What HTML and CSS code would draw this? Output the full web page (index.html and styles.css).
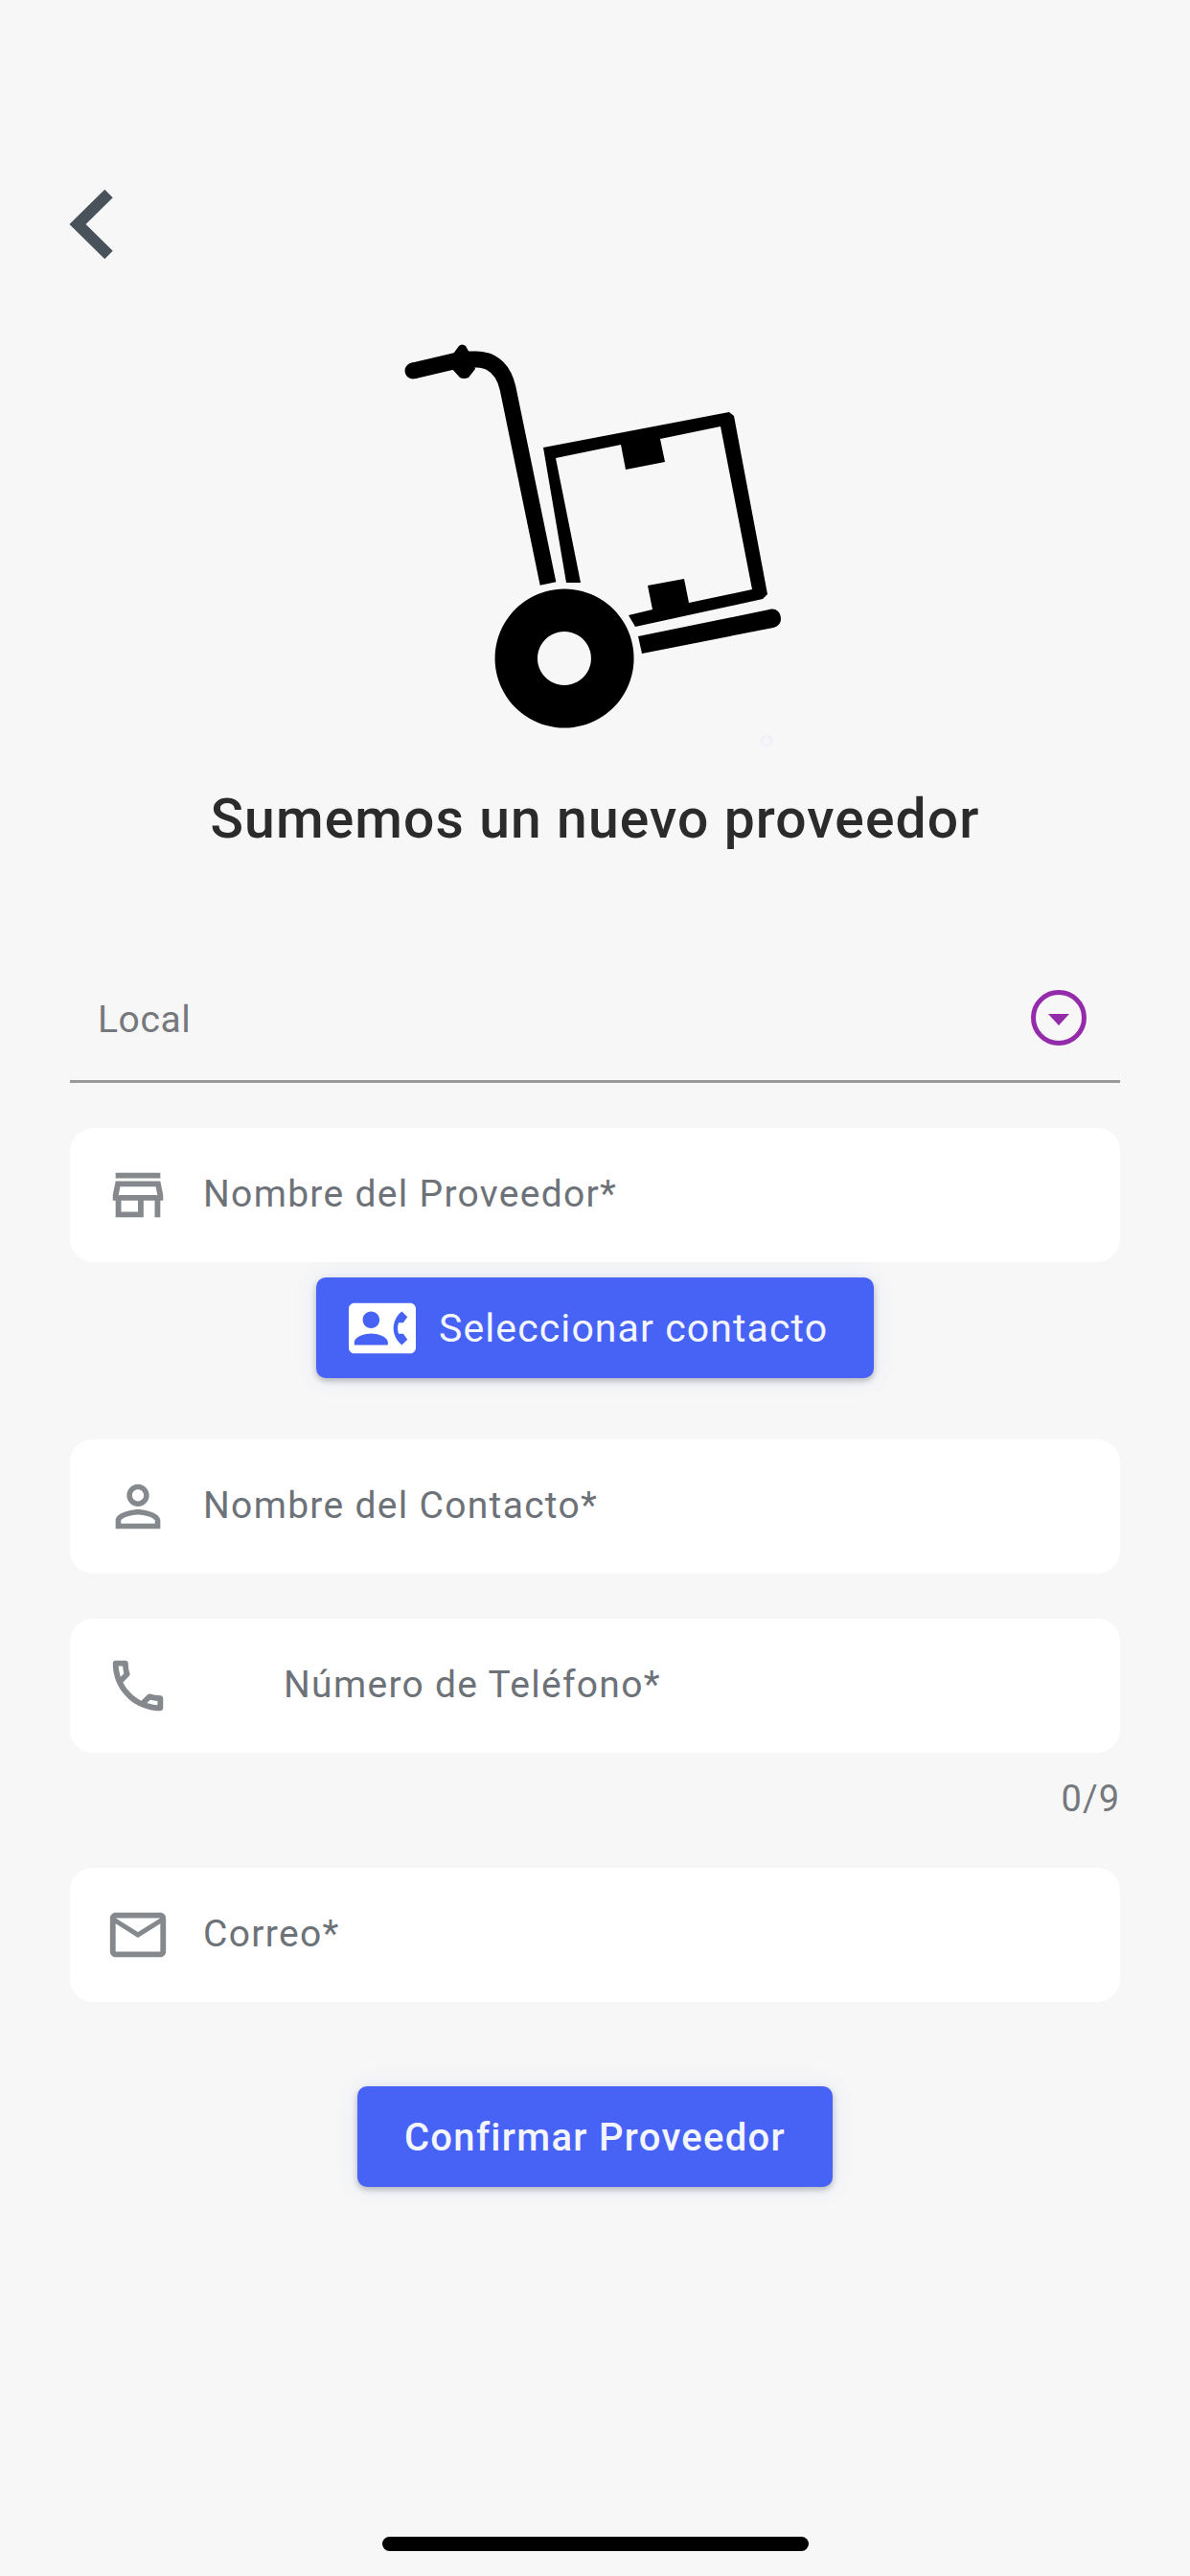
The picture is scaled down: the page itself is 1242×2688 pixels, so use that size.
FILE: index.html
```html
<!DOCTYPE html>
<html>
	<head>
		<meta charset="utf-8">
		<title>Sumemos un nuevo proveedor</title>
		<link rel="stylesheet" href="styles.css">
	</head>
	<body>
		<div class="page">
			<a class="back">
				<svg width="60" height="80" viewBox="70 194 60 80"><path class="back-line" d="M113.500 202 81 234l32.500 32"/></svg>
			</a>

			<svg class="hero" width="400" height="425" viewBox="421 355 400 425">
				<!-- handle and pole -->
				<path class="pole" d="M431 387 482 375H497C516 375 526 388 530 405L572 609" />
				<circle cx="431" cy="387" r="8.500" />
				<path d="M471 372 479 361Q482 358 486 361L491 370 496 385 489 394Q484 396 480 394L471 384Z" />
				<!-- box -->
				<path d="M567 467 761 430 766 434 801 620 796 625 663 654 656 642 681 636 676 611 714 604 719 629 785 615 752 445 689 458 694 482 653 490 648 464 580 478 606 608 591 608Z" />
				<!-- platform -->
				<path d="M666 664 803 636C810 634 815 639 815 646 815 651 811 654 807 655L670 682Z" />
				<!-- wheel -->
				<path fill-rule="evenodd" d="M589 614.500a72.500 72.500 0 1 0 .1 0ZM589 659a28 28 0 1 1-.1 0Z" />
				<circle class="speck" cx="800" cy="773" r="5" />
			</svg>

			<h1 class="title">Sumemos un nuevo proveedor</h1>

			<div class="select">
				<span class="select-label">Local</span>
				<svg class="select-icon" width="60" height="60" viewBox="0 0 60 60">
					<circle class="select-ring" cx="30" cy="30" r="26.500" />
					<path class="select-arrow" d="M19 26H41L30 38Z" />
				</svg>
			</div>

			<div class="field field-first">
				<svg class="icon" viewBox="0 0 24 24"><path d="M18.360 9l.6 3H5.040l.6-3h12.720M20 4H4v2h16V4zm0 3H4l-1 5v2h1v6h10v-6h4v6h2v-6h1v-2l-1-5zM6 18v-4h6v4H6z"/></svg>
				<span class="field-text">Nombre del Proveedor*</span>
			</div>

			<div class="actions actions-contact">
				<button class="button button-contact">
					<svg class="icon-contact" viewBox="0 0 24 24"><path d="M22 3H2C.9 3 0 3.900 0 5v14c0 1.100.9 2 2 2h20c1.100 0 1.990-.9 1.990-2L24 5c0-1.100-.9-2-2-2zM8 6c1.660 0 3 1.340 3 3s-1.340 3-3 3-3-1.340-3-3 1.340-3 3-3zm6 12H2v-1c0-2 4-3.100 6-3.100s6 1.100 6 3.100v1zm3.850-4h1.640L21 16l-1.990 1.990c-1.310-.98-2.280-2.380-2.730-3.990-.18-.64-.28-1.310-.28-2s.1-1.360.28-2c.45-1.620 1.420-3.010 2.730-3.990L21 8l-1.510 2h-1.640c-.22.63-.35 1.300-.35 2s.13 1.370.35 2z"/></svg>
					Seleccionar contacto
				</button>
			</div>

			<div class="field field-contact">
				<svg class="icon" viewBox="0 0 24 24"><path d="M12 5.900c1.160 0 2.100.94 2.100 2.100s-.94 2.100-2.100 2.100S9.900 9.160 9.900 8s.94-2.100 2.100-2.100m0 9c2.970 0 6.100 1.460 6.100 2.100v1.100H5.900V17c0-.64 3.130-2.100 6.100-2.100M12 4C9.790 4 8 5.790 8 8s1.790 4 4 4 4-1.790 4-4-1.790-4-4-4zm0 9c-2.670 0-8 1.340-8 4v3h16v-3c0-2.660-5.330-4-8-4z"/></svg>
				<span class="field-text">Nombre del Contacto*</span>
			</div>

			<div class="field field-phone">
				<svg class="icon" viewBox="0 0 24 24"><path d="M6.540 5c.06.89.21 1.760.45 2.590l-1.200 1.200c-.41-1.200-.67-2.470-.76-3.790h1.510m9.860 12.020c.85.24 1.720.39 2.600.45v1.490c-1.320-.09-2.590-.35-3.800-.75l1.200-1.190M7.500 3H4c-.55 0-1 .45-1 1 0 9.390 7.610 17 17 17 .55 0 1-.45 1-1v-3.490c0-.55-.45-1-1-1-1.240 0-2.450-.2-3.570-.57-.1-.04-.21-.05-.31-.05-.26 0-.51.1-.71.29l-2.200 2.200c-2.830-1.450-5.150-3.760-6.590-6.590l2.200-2.200c.28-.28.36-.67.25-1.020C8.700 6.450 8.500 5.250 8.500 4c0-.55-.45-1-1-1z"/></svg>
				<span class="field-text field-text-phone">Número de Teléfono*</span>
			</div>

			<div class="counter">0/9</div>

			<div class="field field-mail">
				<svg class="icon" viewBox="0 0 24 24"><path d="M22 6c0-1.100-.9-2-2-2H4c-1.100 0-2 .9-2 2v12c0 1.100.9 2 2 2h16c1.100 0 2-.9 2-2V6zm-2 0l-8 5-8-5h16zm0 12H4V8l8 5 8-5v10z"/></svg>
				<span class="field-text">Correo*</span>
			</div>

			<div class="actions actions-confirm">
				<button class="button button-confirm">Confirmar Proveedor</button>
			</div>

			<div class="home-bar"></div>
		</div>
	</body>
</html>
```

FILE: styles.css
```css
html, body {
    margin: 0;
    padding: 0;
    background: #f7f7f7;
}
.page {
    width: 1242px;
    height: 2688px;
    box-sizing: border-box;
    padding: 194px 73px 0 73px;
    font-family: Roboto, "Noto Sans", sans-serif;
    overflow: hidden;
}
.back {
    display: block;
    height: 80px;
    margin-left: -3px;
}
.back svg {
    display: block;
}
.back-line {
    fill: none;
    stroke: #49525b;
    stroke-width: 12;
}
.hero {
    display: block;
    margin: 81px auto 0 auto;
    fill: #000;
}
.pole {
    fill: none;
    stroke: #000;
    stroke-width: 17;
}
.speck {
    fill: none;
    stroke: #eeeef8;
    stroke-width: 2;
}
.title {
    margin: 35px 0 0 0;
    height: 80px;
    line-height: 80px;
    text-align: center;
    font-size: 57px;
    font-weight: 500;
    letter-spacing: 1.1px;
    color: #2b2b2b;
}
.select {
    display: flex;
    align-items: center;
    justify-content: space-between;
    height: 114px;
    margin-top: 112px;
    padding: 0 34px 6px 29px;
    border-bottom: 3px solid #999;
}
.select-label {
    font-size: 39px;
    letter-spacing: 0.6px;
    color: #75787c;
}
.select-icon {
    margin-bottom: 4px;
}
.select-ring {
    fill: none;
    stroke: #942bab;
    stroke-width: 5;
}
.select-arrow {
    fill: #942bab;
}
.field {
    display: flex;
    align-items: center;
    height: 140px;
    background: #fff;
    border-radius: 24px;
}
.field-first {
    margin-top: 47px;
}
.field-contact {
    margin-top: 64px;
}
.field-phone {
    margin-top: 47px;
}
.field-mail {
    margin-top: 52px;
}
.icon {
    width: 70px;
    height: 70px;
    margin: 0 33px 0 36px;
    flex: none;
    fill: #85888c;
}
.field-text {
    padding-bottom: 3px;
    font-size: 39px;
    letter-spacing: 1.3px;
    color: #6d7278;
}
.field-text-phone {
    margin-left: 84px;
}
.counter {
    height: 40px;
    line-height: 40px;
    margin-top: 28px;
    text-align: right;
    font-size: 38px;
    letter-spacing: 1px;
    color: #75787c;
}
.actions {
    display: flex;
    justify-content: center;
}
.actions-contact {
    margin-top: 16px;
}
.actions-confirm {
    margin-top: 88px;
}
.button {
    display: flex;
    align-items: center;
    justify-content: center;
    height: 105px;
    padding: 0;
    border: 0;
    border-radius: 10px;
    background: #4763f5;
    color: #f4f6ff;
    font-family: inherit;
    box-shadow: 0 3px 6px rgba(0, 0, 0, 0.25), 0 0 24px rgba(71, 99, 245, 0.1);
}
.button-contact {
    width: 582px;
    gap: 24px;
    justify-content: flex-start;
    padding-left: 34px;
    font-size: 41px;
    letter-spacing: 1.1px;
}
.icon-contact {
    width: 70px;
    height: 70px;
    fill: #fff;
}
.button-confirm {
    width: 496px;
    padding-top: 2px;
    font-size: 40px;
    font-weight: 500;
    letter-spacing: 1.3px;
}
.home-bar {
    width: 445px;
    height: 15px;
    margin: 365px auto 0 auto;
    border-radius: 8px;
    background: #000;
}
```
